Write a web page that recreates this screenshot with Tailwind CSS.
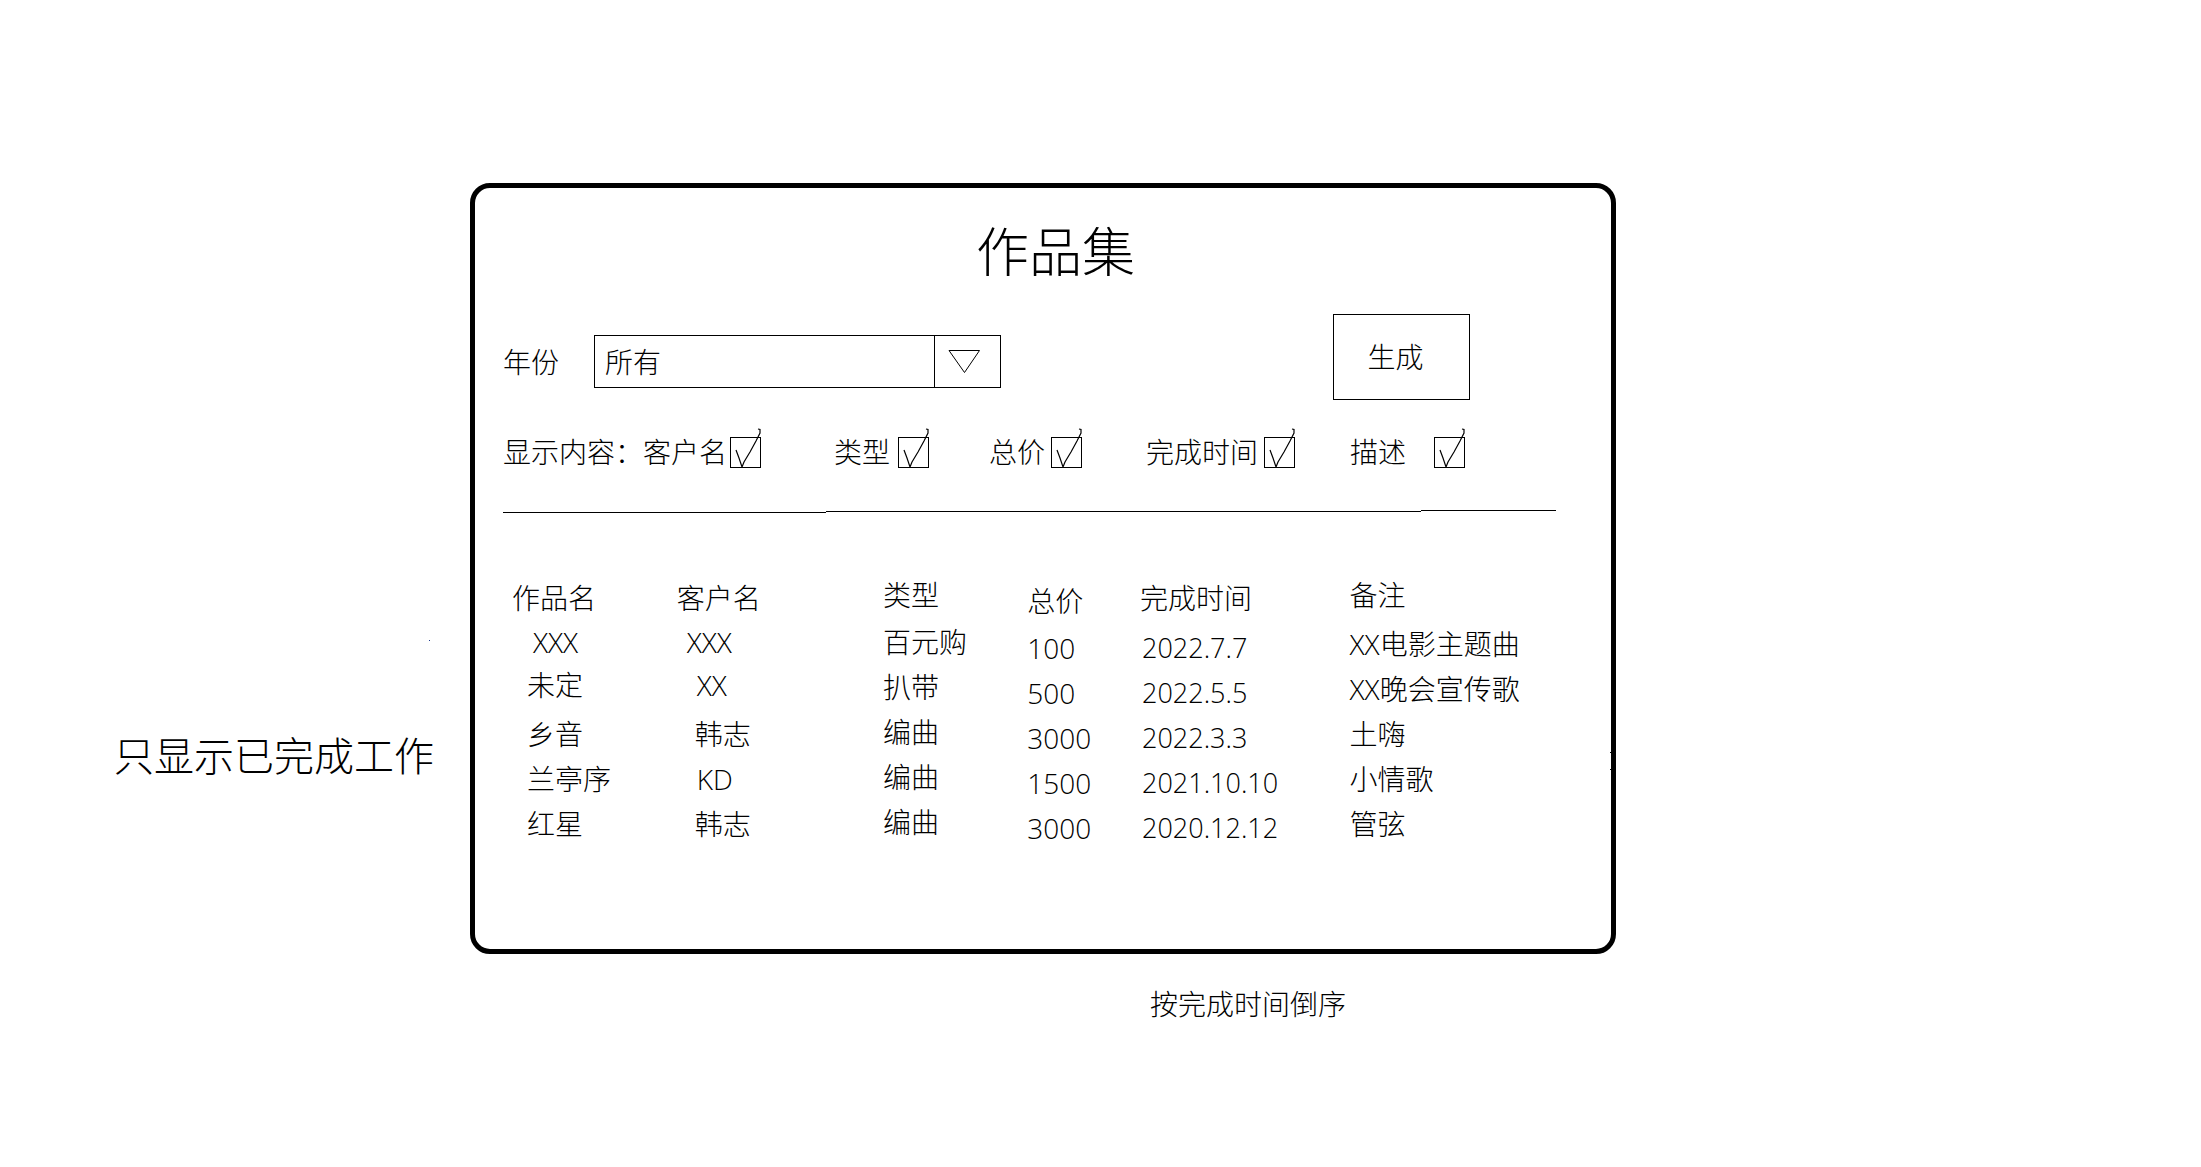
<!DOCTYPE html>
<html lang="zh-CN">
<head>
<meta charset="utf-8">
<title>作品集</title>
<script src="https://cdn.jsdelivr.net/npm/@tailwindcss/browser@4"></script>
</head>
<body class="bg-white text-black font-light text-[28px] leading-10 font-['Open_Sans','Noto_Sans_CJK_SC',sans-serif]">
<svg class="hidden" aria-hidden="true">
  <symbol id="tick" viewBox="0 -9 31 40"><path d="M6 13L9 21L12 30L14 25L20 15L26 4L30 -4V-7.500L28 -8" fill="none" stroke="#000" stroke-width="1.200"/></symbol>
</svg>
<main class="grid grid-cols-[470fr_1146fr_585fr] items-start pt-[183px]">
  <aside class="relative pt-[543px] pr-9">
    <span class="absolute top-[457px] right-10 size-px bg-blue-900"></span>
    <p class="text-right text-[40px] leading-[60px] whitespace-nowrap">只显示已完成工作</p>
  </aside>

  <div>
    <section class="relative rounded-[20px] border-5 border-black pt-8 pr-[55px] pb-[103px] pl-7">
      <span class="absolute top-[564px] right-0 size-px bg-black"></span>
      <span class="absolute top-[581px] right-0 size-px bg-black"></span>
      <h1 class="pl-13 text-center text-[53px] leading-16">作品集</h1>

      <div class="mt-[30px] flex items-end justify-between pr-[86px]">
        <div class="flex items-center gap-[35px] pb-3">
          <label for="year" class="whitespace-nowrap">年份</label>
          <div class="relative">
            <select id="year" class="h-[53px] w-[407px] appearance-none border border-black bg-white pr-18 pl-[10px]">
              <option>所有</option>
            </select>
            <svg class="pointer-events-none absolute top-0 right-0 h-[53px] w-[67px]" viewBox="0 0 67 53" fill="none" stroke="#000" aria-hidden="true"><path d="M0.500 0V53"/><path d="M15 15.500H45.500L30.500 37.500Z"/></svg>
          </div>
        </div>
        <button type="button" class="h-[86px] w-[137px] border border-black pr-3">生成</button>
      </div>

      <div role="group" aria-labelledby="shown" class="mt-8 grid grid-cols-[331fr_155fr_157fr_204fr_206fr] items-center whitespace-nowrap">
        <div class="flex items-center">
          <span id="shown">显示内容：</span>
          <label class="flex items-center gap-[3px]">客户名<span class="relative size-[31px]"><input type="checkbox" checked class="peer block size-[31px] appearance-none border border-black"><svg class="pointer-events-none invisible absolute bottom-0 left-0 h-10 w-[31px] peer-checked:visible"><use href="#tick"/></svg></span></label>
        </div>
        <label class="flex items-center gap-2">类型<span class="relative size-[31px]"><input type="checkbox" checked class="peer block size-[31px] appearance-none border border-black"><svg class="pointer-events-none invisible absolute bottom-0 left-0 h-10 w-[31px] peer-checked:visible"><use href="#tick"/></svg></span></label>
        <label class="flex items-center gap-[6px]">总价<span class="relative size-[31px]"><input type="checkbox" checked class="peer block size-[31px] appearance-none border border-black"><svg class="pointer-events-none invisible absolute bottom-0 left-0 h-10 w-[31px] peer-checked:visible"><use href="#tick"/></svg></span></label>
        <label class="flex items-center gap-[6px]">完成时间<span class="relative size-[31px]"><input type="checkbox" checked class="peer block size-[31px] appearance-none border border-black"><svg class="pointer-events-none invisible absolute bottom-0 left-0 h-10 w-[31px] peer-checked:visible"><use href="#tick"/></svg></span></label>
        <label class="flex items-center gap-7">描述<span class="relative size-[31px]"><input type="checkbox" checked class="peer block size-[31px] appearance-none border border-black"><svg class="pointer-events-none invisible absolute bottom-0 left-0 h-10 w-[31px] peer-checked:visible"><use href="#tick"/></svg></span></label>
      </div>

      <svg class="mt-[38px] block h-[3px] w-full" viewBox="0 0 1052 3" preserveAspectRatio="none" shape-rendering="crispEdges" aria-hidden="true"><path d="M0 2H323V3H0ZM323 1H917V2H323ZM917 0H1052V1H917Z"/></svg>

      <table class="mt-[62px] w-full table-fixed text-left whitespace-nowrap">
        <colgroup>
          <col class="w-[16.5%]"><col class="w-[19.6%]"><col class="w-[13.7%]"><col class="w-[10.7%]"><col class="w-[19.9%]"><col>
        </colgroup>
        <thead>
          <tr class="h-[46px] *:p-0 *:font-light">
            <th scope="col"><div class="pl-[9px]">作品名</div></th>
            <th scope="col">客户名</th>
            <th scope="col"><div class="pb-[6px]">类型</div></th>
            <th scope="col"><div class="pt-[6px]">总价</div></th>
            <th scope="col">完成时间</th>
            <th scope="col"><div class="pb-[6px]">备注</div></th>
          </tr>
        </thead>
        <tbody>
          <tr class="h-[45px] *:p-0">
            <td><div class="-mt-1 pl-[30px]">XXX</div></td><td><div class="-mt-1 pl-[10px]">XXX</div></td>
            <td><div class="-mt-1">百元购</div></td><td><div class="-mb-2">100</div></td>
            <td><div class="-mb-2 pl-[2px] text-[27px]">2022.7.7</div></td><td>XX电影主题曲</td>
          </tr>
          <tr class="h-[45px] *:p-0">
            <td><div class="-mt-2 pl-6">未定</div></td><td><div class="-mt-2 pl-5">XX</div></td>
            <td><div class="-mt-1">扒带</div></td><td><div class="-mb-2">500</div></td>
            <td><div class="-mb-2 pl-[2px] text-[27px]">2022.5.5</div></td><td>XX晚会宣传歌</td>
          </tr>
          <tr class="h-[45px] *:p-0">
            <td><div class="pl-6">乡音</div></td><td><div class="pl-[18px]">韩志</div></td>
            <td><div class="-mt-1">编曲</div></td><td><div class="-mb-2">3000</div></td>
            <td><div class="-mb-2 pl-[2px] text-[27px]">2022.3.3</div></td><td>土嗨</td>
          </tr>
          <tr class="h-[45px] *:p-0">
            <td><div class="pl-6">兰亭序</div></td><td><div class="pl-5">KD</div></td>
            <td><div class="-mt-1">编曲</div></td><td><div class="-mb-2">1500</div></td>
            <td><div class="-mb-2 pl-[2px] text-[27px]">2021.10.10</div></td><td>小情歌</td>
          </tr>
          <tr class="h-[45px] *:p-0">
            <td><div class="pl-6">红星</div></td><td><div class="pl-[18px]">韩志</div></td>
            <td><div class="-mt-1">编曲</div></td><td><div class="-mb-2">3000</div></td>
            <td><div class="-mb-2 pl-[2px] text-[27px]">2020.12.12</div></td><td>管弦</td>
          </tr>
        </tbody>
      </table>
    </section>
    <p class="mt-[30px] pl-[680px] whitespace-nowrap">按完成时间倒序</p>
  </div>
</main>
</body>
</html>
